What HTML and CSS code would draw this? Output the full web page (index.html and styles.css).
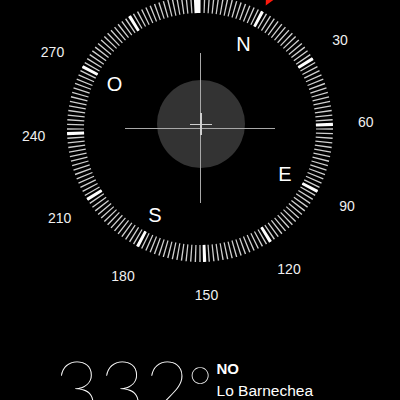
FILE: index.html
```html
<!DOCTYPE html>
<html lang="es">
<head>
    <meta charset="UTF-8">
    <meta name="viewport" content="width=device-width, initial-scale=1.0">
    <title>Brújula</title>
    <link rel="stylesheet" href="styles.css">
</head>
<body>
    <svg class="dial" width="400" height="340" viewBox="0 0 400 340">
        <!-- scale turns with the heading: 0 deg sits 28 deg right of the top -->
        <g transform="rotate(-62 200 129)">
            <circle class="ticks" cx="200" cy="129" r="124.5" pathLength="360"/>
            <circle class="ticks-major" cx="200" cy="129" r="124.5" pathLength="360"/>
        </g>
        <polygon class="north-mark" points="200,-11 193,-25 207,-25" transform="rotate(28 200 129)"/>
        <rect class="heading" x="197" y="-6" width="3" height="19"/>

        <circle class="level" cx="201" cy="124" r="44"/>
        <line class="cross" x1="125" y1="128.5" x2="275" y2="128.5"/>
        <line class="cross" x1="200.5" y1="53" x2="200.5" y2="203"/>
        <line class="bubble" x1="190" y1="124.5" x2="212" y2="124.5"/>
        <line class="bubble bubble-v" x1="201" y1="113" x2="201" y2="135"/>

        <text class="card" x="243.5" y="51">N</text>
        <text class="card" x="285" y="180.5">E</text>
        <text class="card" x="155" y="222">S</text>
        <text class="card" x="114.5" y="91">O</text>

        <text class="num" x="340" y="45">30</text>
        <text class="num" x="365.7" y="127">60</text>
        <text class="num" x="347" y="211.4">90</text>
        <text class="num" x="289" y="274">120</text>
        <text class="num" x="206.5" y="300">150</text>
        <text class="num" x="123" y="281">180</text>
        <text class="num" x="59.7" y="223">210</text>
        <text class="num" x="33.7" y="140.7">240</text>
        <text class="num" x="52.5" y="57">270</text>
    </svg>

    <div class="readout">
        <div class="degrees">332<span class="deg-sign">°</span></div>
        <div class="place">
            <div class="dir">NO</div>
            <div class="city">Lo Barnechea</div>
        </div>
    </div>
</body>
</html>
```

FILE: styles.css
```css
body {
    margin: 0;
    background: #000;
    color: #fff;
    font-family: "Liberation Sans", Arial, sans-serif;
    overflow: hidden;
}
.dial {
    display: block;
    overflow: visible;
}
.ticks {
    fill: none;
    stroke: #cfcfcf;
    stroke-width: 17;
    stroke-dasharray: 0.6 1.4;
    stroke-dashoffset: 0.3;
}
.ticks-major {
    fill: none;
    stroke: #fff;
    stroke-width: 17;
    stroke-dasharray: 1.4 28.6;
    stroke-dashoffset: 0.7;
}
.north-mark {
    fill: #ff1a0d;
}
.heading {
    fill: #fff;
}
.level {
    fill: #333;
}
.cross {
    stroke: #a8a8a8;
    stroke-width: 1;
}
.bubble {
    stroke: #d0d0d0;
    stroke-width: 1;
}
.bubble-v {
    stroke-width: 2;
}
.card {
    fill: #fff;
    font-size: 20px;
    text-anchor: middle;
}
.num {
    fill: #f0f0f0;
    font-size: 14px;
    text-anchor: middle;
}
.readout {
    display: flex;
    align-items: flex-start;
    padding-left: 54px;
    margin-top: 8px;
}
.degrees {
    font-family: "Lato", "Roboto", sans-serif;
    font-weight: 100;
    font-size: 78px;
    line-height: 78px;
}
.deg-sign {
    font-size: 60px;
    vertical-align: top;
    margin-left: -2px;
}
.place {
    margin-left: 4px;
    padding-top: 12px;
}
.dir {
    font-weight: bold;
    font-size: 15px;
    line-height: 18px;
}
.city {
    font-size: 15.5px;
    line-height: 20px;
    margin-top: 3px;
}
```
